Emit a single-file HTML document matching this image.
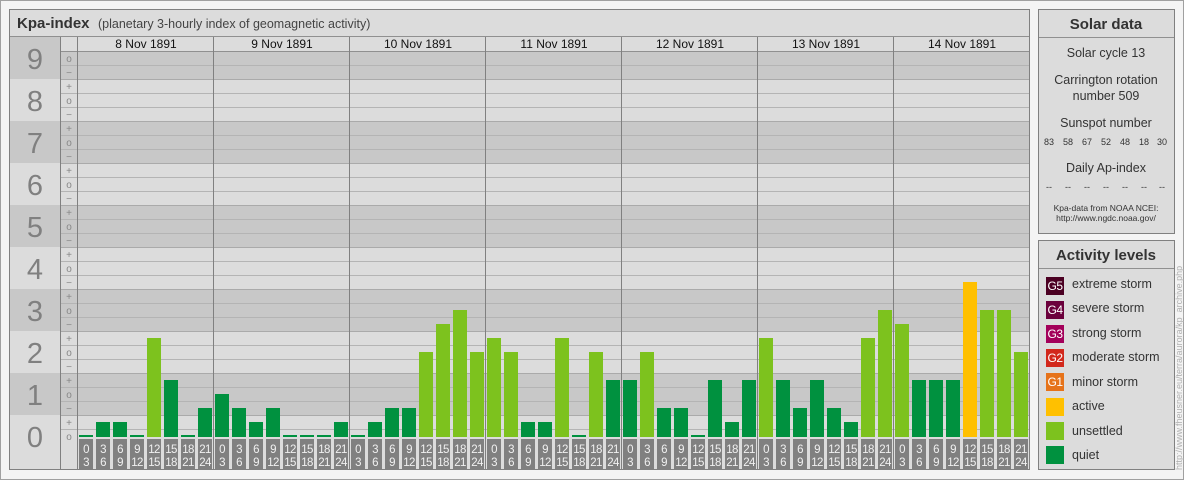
<!DOCTYPE html>
<html><head><meta charset="utf-8"><style>
html,body{margin:0;padding:0;background:#f4f4f4;}
svg{display:block;font-family:"Liberation Sans",Arial,sans-serif;}
</style></head><body>
<svg width="1184" height="480" viewBox="0 0 1184 480" xmlns="http://www.w3.org/2000/svg">
<rect x="0.5" y="0.5" width="1183" height="479" fill="#f4f4f4" stroke="#a0a0a0"/>
<!-- main panel -->
<rect x="9.5" y="9.5" width="1020" height="460" fill="#dcdcdc" stroke="#808080"/>
<line x1="10" y1="36.5" x2="1029" y2="36.5" stroke="#909090"/>
<text x="17" y="28" font-size="15" font-weight="bold" fill="#333">Kpa-index</text>
<text x="98" y="28" font-size="12.5" fill="#444">(planetary 3-hourly index of geomagnetic activity)</text>
<!-- bands -->
<g fill="#c8c8c8">
<rect x="10" y="37" width="50" height="42"/>
<rect x="60" y="51" width="969" height="28"/>
<rect x="10" y="121" width="1019" height="42"/>
<rect x="10" y="205" width="1019" height="42"/>
<rect x="10" y="289" width="1019" height="42"/>
<rect x="10" y="373" width="1019" height="42"/>
</g>
<!-- sub-row lines -->
<g stroke="#b4b4b4" stroke-width="1">
<path d="M60 65.5H1029M60 93.5H1029M60 107.5H1029M60 135.5H1029M60 149.5H1029M60 177.5H1029M60 191.5H1029M60 219.5H1029M60 233.5H1029M60 261.5H1029M60 275.5H1029M60 303.5H1029M60 317.5H1029M60 345.5H1029M60 359.5H1029M60 387.5H1029M60 401.5H1029M60 429.5H1029"/>
</g>
<g stroke="#aaaaaa"><path d="M60 79.5H1029M60 121.5H1029M60 163.5H1029M60 205.5H1029M60 247.5H1029M60 289.5H1029M60 331.5H1029M60 373.5H1029M60 415.5H1029"/></g>
<line x1="60" y1="51.5" x2="1029" y2="51.5" stroke="#909090"/>
<g stroke="#808080"><path d="M60.5 37V470M77.5 37V470M213.5 37V470M349.5 37V470M485.5 37V470M621.5 37V470M757.5 37V470M893.5 37V470"/></g>
<!-- big numbers -->
<g font-size="29" fill="#808080" text-anchor="middle">
<text x="35" y="69">9</text><text x="35" y="111">8</text><text x="35" y="153">7</text><text x="35" y="195">6</text><text x="35" y="237">5</text><text x="35" y="279">4</text><text x="35" y="321">3</text><text x="35" y="363">2</text><text x="35" y="405">1</text><text x="35" y="447">0</text>
</g>
<g font-size="10" fill="#888" text-anchor="middle">
<text x="69" y="62">o</text><text x="69" y="76">−</text>
<text x="69" y="90">+</text><text x="69" y="104">o</text><text x="69" y="118">−</text>
<text x="69" y="132">+</text><text x="69" y="146">o</text><text x="69" y="160">−</text>
<text x="69" y="174">+</text><text x="69" y="188">o</text><text x="69" y="202">−</text>
<text x="69" y="216">+</text><text x="69" y="230">o</text><text x="69" y="244">−</text>
<text x="69" y="258">+</text><text x="69" y="272">o</text><text x="69" y="286">−</text>
<text x="69" y="300">+</text><text x="69" y="314">o</text><text x="69" y="328">−</text>
<text x="69" y="342">+</text><text x="69" y="356">o</text><text x="69" y="370">−</text>
<text x="69" y="384">+</text><text x="69" y="398">o</text><text x="69" y="412">−</text>
<text x="69" y="426">+</text><text x="69" y="440">o</text>
</g>
<!-- day headers -->
<g font-size="12" fill="#111" text-anchor="middle">
<text x="146" y="48">8 Nov 1891</text><text x="282" y="48">9 Nov 1891</text><text x="418" y="48">10 Nov 1891</text><text x="554" y="48">11 Nov 1891</text><text x="690" y="48">12 Nov 1891</text><text x="826" y="48">13 Nov 1891</text><text x="962" y="48">14 Nov 1891</text>
</g>
<!-- bars -->
<g>
<rect x="79" y="435" width="14" height="2" fill="#00913f"/><rect x="96" y="422" width="14" height="15" fill="#00913f"/><rect x="113" y="422" width="14" height="15" fill="#00913f"/><rect x="130" y="435" width="14" height="2" fill="#00913f"/><rect x="147" y="338" width="14" height="99" fill="#7dc21e"/><rect x="164" y="380" width="14" height="57" fill="#00913f"/><rect x="181" y="435" width="14" height="2" fill="#00913f"/><rect x="198" y="408" width="14" height="29" fill="#00913f"/>
<rect x="215" y="394" width="14" height="43" fill="#00913f"/><rect x="232" y="408" width="14" height="29" fill="#00913f"/><rect x="249" y="422" width="14" height="15" fill="#00913f"/><rect x="266" y="408" width="14" height="29" fill="#00913f"/><rect x="283" y="435" width="14" height="2" fill="#00913f"/><rect x="300" y="435" width="14" height="2" fill="#00913f"/><rect x="317" y="435" width="14" height="2" fill="#00913f"/><rect x="334" y="422" width="14" height="15" fill="#00913f"/>
<rect x="351" y="435" width="14" height="2" fill="#00913f"/><rect x="368" y="422" width="14" height="15" fill="#00913f"/><rect x="385" y="408" width="14" height="29" fill="#00913f"/><rect x="402" y="408" width="14" height="29" fill="#00913f"/><rect x="419" y="352" width="14" height="85" fill="#7dc21e"/><rect x="436" y="324" width="14" height="113" fill="#7dc21e"/><rect x="453" y="310" width="14" height="127" fill="#7dc21e"/><rect x="470" y="352" width="14" height="85" fill="#7dc21e"/>
<rect x="487" y="338" width="14" height="99" fill="#7dc21e"/><rect x="504" y="352" width="14" height="85" fill="#7dc21e"/><rect x="521" y="422" width="14" height="15" fill="#00913f"/><rect x="538" y="422" width="14" height="15" fill="#00913f"/><rect x="555" y="338" width="14" height="99" fill="#7dc21e"/><rect x="572" y="435" width="14" height="2" fill="#00913f"/><rect x="589" y="352" width="14" height="85" fill="#7dc21e"/><rect x="606" y="380" width="14" height="57" fill="#00913f"/>
<rect x="623" y="380" width="14" height="57" fill="#00913f"/><rect x="640" y="352" width="14" height="85" fill="#7dc21e"/><rect x="657" y="408" width="14" height="29" fill="#00913f"/><rect x="674" y="408" width="14" height="29" fill="#00913f"/><rect x="691" y="435" width="14" height="2" fill="#00913f"/><rect x="708" y="380" width="14" height="57" fill="#00913f"/><rect x="725" y="422" width="14" height="15" fill="#00913f"/><rect x="742" y="380" width="14" height="57" fill="#00913f"/>
<rect x="759" y="338" width="14" height="99" fill="#7dc21e"/><rect x="776" y="380" width="14" height="57" fill="#00913f"/><rect x="793" y="408" width="14" height="29" fill="#00913f"/><rect x="810" y="380" width="14" height="57" fill="#00913f"/><rect x="827" y="408" width="14" height="29" fill="#00913f"/><rect x="844" y="422" width="14" height="15" fill="#00913f"/><rect x="861" y="338" width="14" height="99" fill="#7dc21e"/><rect x="878" y="310" width="14" height="127" fill="#7dc21e"/>
<rect x="895" y="324" width="14" height="113" fill="#7dc21e"/><rect x="912" y="380" width="14" height="57" fill="#00913f"/><rect x="929" y="380" width="14" height="57" fill="#00913f"/><rect x="946" y="380" width="14" height="57" fill="#00913f"/><rect x="963" y="282" width="14" height="155" fill="#ffc000"/><rect x="980" y="310" width="14" height="127" fill="#7dc21e"/><rect x="997" y="310" width="14" height="127" fill="#7dc21e"/><rect x="1014" y="352" width="14" height="85" fill="#7dc21e"/>
</g>
<!-- label boxes -->
<rect x="78" y="437" width="951" height="33" fill="#dcdcdc"/>
<g stroke="#808080"><path d="M213.5 437V470M349.5 437V470M485.5 437V470M621.5 437V470M757.5 437V470M893.5 437V470"/></g>
<g fill="#808080">
<rect x="79" y="439" width="14" height="30"/><rect x="96" y="439" width="14" height="30"/><rect x="113" y="439" width="14" height="30"/><rect x="130" y="439" width="14" height="30"/><rect x="147" y="439" width="14" height="30"/><rect x="164" y="439" width="14" height="30"/><rect x="181" y="439" width="14" height="30"/><rect x="198" y="439" width="14" height="30"/>
<rect x="215" y="439" width="14" height="30"/><rect x="232" y="439" width="14" height="30"/><rect x="249" y="439" width="14" height="30"/><rect x="266" y="439" width="14" height="30"/><rect x="283" y="439" width="14" height="30"/><rect x="300" y="439" width="14" height="30"/><rect x="317" y="439" width="14" height="30"/><rect x="334" y="439" width="14" height="30"/>
<rect x="351" y="439" width="14" height="30"/><rect x="368" y="439" width="14" height="30"/><rect x="385" y="439" width="14" height="30"/><rect x="402" y="439" width="14" height="30"/><rect x="419" y="439" width="14" height="30"/><rect x="436" y="439" width="14" height="30"/><rect x="453" y="439" width="14" height="30"/><rect x="470" y="439" width="14" height="30"/>
<rect x="487" y="439" width="14" height="30"/><rect x="504" y="439" width="14" height="30"/><rect x="521" y="439" width="14" height="30"/><rect x="538" y="439" width="14" height="30"/><rect x="555" y="439" width="14" height="30"/><rect x="572" y="439" width="14" height="30"/><rect x="589" y="439" width="14" height="30"/><rect x="606" y="439" width="14" height="30"/>
<rect x="623" y="439" width="14" height="30"/><rect x="640" y="439" width="14" height="30"/><rect x="657" y="439" width="14" height="30"/><rect x="674" y="439" width="14" height="30"/><rect x="691" y="439" width="14" height="30"/><rect x="708" y="439" width="14" height="30"/><rect x="725" y="439" width="14" height="30"/><rect x="742" y="439" width="14" height="30"/>
<rect x="759" y="439" width="14" height="30"/><rect x="776" y="439" width="14" height="30"/><rect x="793" y="439" width="14" height="30"/><rect x="810" y="439" width="14" height="30"/><rect x="827" y="439" width="14" height="30"/><rect x="844" y="439" width="14" height="30"/><rect x="861" y="439" width="14" height="30"/><rect x="878" y="439" width="14" height="30"/>
<rect x="895" y="439" width="14" height="30"/><rect x="912" y="439" width="14" height="30"/><rect x="929" y="439" width="14" height="30"/><rect x="946" y="439" width="14" height="30"/><rect x="963" y="439" width="14" height="30"/><rect x="980" y="439" width="14" height="30"/><rect x="997" y="439" width="14" height="30"/><rect x="1014" y="439" width="14" height="30"/>
</g>
<g font-size="11.5" fill="#f0f0f0" text-anchor="middle" letter-spacing="-0.6">
<text x="86" y="453">0</text><text x="103" y="453">3</text><text x="120" y="453">6</text><text x="137" y="453">9</text><text x="154" y="453">12</text><text x="171" y="453">15</text><text x="188" y="453">18</text><text x="205" y="453">21</text>
<text x="86" y="466">3</text><text x="103" y="466">6</text><text x="120" y="466">9</text><text x="137" y="466">12</text><text x="154" y="466">15</text><text x="171" y="466">18</text><text x="188" y="466">21</text><text x="205" y="466">24</text>
<text x="222" y="453">0</text><text x="239" y="453">3</text><text x="256" y="453">6</text><text x="273" y="453">9</text><text x="290" y="453">12</text><text x="307" y="453">15</text><text x="324" y="453">18</text><text x="341" y="453">21</text>
<text x="222" y="466">3</text><text x="239" y="466">6</text><text x="256" y="466">9</text><text x="273" y="466">12</text><text x="290" y="466">15</text><text x="307" y="466">18</text><text x="324" y="466">21</text><text x="341" y="466">24</text>
<text x="358" y="453">0</text><text x="375" y="453">3</text><text x="392" y="453">6</text><text x="409" y="453">9</text><text x="426" y="453">12</text><text x="443" y="453">15</text><text x="460" y="453">18</text><text x="477" y="453">21</text>
<text x="358" y="466">3</text><text x="375" y="466">6</text><text x="392" y="466">9</text><text x="409" y="466">12</text><text x="426" y="466">15</text><text x="443" y="466">18</text><text x="460" y="466">21</text><text x="477" y="466">24</text>
<text x="494" y="453">0</text><text x="511" y="453">3</text><text x="528" y="453">6</text><text x="545" y="453">9</text><text x="562" y="453">12</text><text x="579" y="453">15</text><text x="596" y="453">18</text><text x="613" y="453">21</text>
<text x="494" y="466">3</text><text x="511" y="466">6</text><text x="528" y="466">9</text><text x="545" y="466">12</text><text x="562" y="466">15</text><text x="579" y="466">18</text><text x="596" y="466">21</text><text x="613" y="466">24</text>
<text x="630" y="453">0</text><text x="647" y="453">3</text><text x="664" y="453">6</text><text x="681" y="453">9</text><text x="698" y="453">12</text><text x="715" y="453">15</text><text x="732" y="453">18</text><text x="749" y="453">21</text>
<text x="630" y="466">3</text><text x="647" y="466">6</text><text x="664" y="466">9</text><text x="681" y="466">12</text><text x="698" y="466">15</text><text x="715" y="466">18</text><text x="732" y="466">21</text><text x="749" y="466">24</text>
<text x="766" y="453">0</text><text x="783" y="453">3</text><text x="800" y="453">6</text><text x="817" y="453">9</text><text x="834" y="453">12</text><text x="851" y="453">15</text><text x="868" y="453">18</text><text x="885" y="453">21</text>
<text x="766" y="466">3</text><text x="783" y="466">6</text><text x="800" y="466">9</text><text x="817" y="466">12</text><text x="834" y="466">15</text><text x="851" y="466">18</text><text x="868" y="466">21</text><text x="885" y="466">24</text>
<text x="902" y="453">0</text><text x="919" y="453">3</text><text x="936" y="453">6</text><text x="953" y="453">9</text><text x="970" y="453">12</text><text x="987" y="453">15</text><text x="1004" y="453">18</text><text x="1021" y="453">21</text>
<text x="902" y="466">3</text><text x="919" y="466">6</text><text x="936" y="466">9</text><text x="953" y="466">12</text><text x="970" y="466">15</text><text x="987" y="466">18</text><text x="1004" y="466">21</text><text x="1021" y="466">24</text>
</g>
<rect x="9.5" y="9.5" width="1020" height="460" fill="none" stroke="#808080"/>
<!-- Solar data -->
<rect x="1038.5" y="9.5" width="136" height="224" fill="#dcdcdc" stroke="#808080"/>
<line x1="1039" y1="37.5" x2="1174" y2="37.5" stroke="#909090"/>
<g text-anchor="middle" fill="#333">
<text x="1106" y="29" font-size="15" font-weight="bold">Solar data</text>
<text x="1106" y="57" font-size="12.5">Solar cycle 13</text>
<text x="1106" y="84" font-size="12.5">Carrington rotation</text>
<text x="1106" y="100" font-size="12.5">number 509</text>
<text x="1106" y="127" font-size="12.5">Sunspot number</text>
<text x="1106" y="172" font-size="12.5">Daily Ap-index</text>
</g>
<g text-anchor="middle" fill="#333" font-size="9">
<text x="1049" y="145">83</text><text x="1068" y="145">58</text><text x="1087" y="145">67</text><text x="1106" y="145">52</text><text x="1125" y="145">48</text><text x="1144" y="145">18</text><text x="1162" y="145">30</text>
<text x="1049" y="190">--</text><text x="1068" y="190">--</text><text x="1087" y="190">--</text><text x="1106" y="190">--</text><text x="1125" y="190">--</text><text x="1144" y="190">--</text><text x="1162" y="190">--</text>
<text x="1106" y="211" font-size="8.5">Kpa-data from NOAA NCEI:</text>
<text x="1106" y="221" font-size="8.5">http://www.ngdc.noaa.gov/</text>
</g>
<!-- Activity levels -->
<rect x="1038.5" y="240.5" width="136" height="229" fill="#dcdcdc" stroke="#808080"/>
<line x1="1039" y1="268.5" x2="1174" y2="268.5" stroke="#909090"/>
<text x="1106" y="260" font-size="15" font-weight="bold" text-anchor="middle" fill="#333">Activity levels</text>
<rect x="1046" y="277" width="18" height="18" fill="#4b0022"/>
<rect x="1046" y="301" width="18" height="18" fill="#6b003c"/>
<rect x="1046" y="325" width="18" height="18" fill="#a3005a"/>
<rect x="1046" y="349" width="18" height="18" fill="#d2281c"/>
<rect x="1046" y="373" width="18" height="18" fill="#e6731a"/>
<rect x="1046" y="398" width="18" height="18" fill="#ffc000"/>
<rect x="1046" y="422" width="18" height="18" fill="#7dc21e"/>
<rect x="1046" y="446" width="18" height="18" fill="#00913f"/>
<g font-size="12" fill="#fff" text-anchor="middle" letter-spacing="-0.5">
<text x="1055" y="290">G5</text><text x="1055" y="314">G4</text><text x="1055" y="338">G3</text><text x="1055" y="362">G2</text><text x="1055" y="386">G1</text>
</g>
<g font-size="12.5" fill="#333">
<text x="1072" y="288">extreme storm</text><text x="1072" y="312">severe storm</text><text x="1072" y="337">strong storm</text><text x="1072" y="361">moderate storm</text><text x="1072" y="386">minor storm</text><text x="1072" y="410">active</text><text x="1072" y="435">unsettled</text><text x="1072" y="459">quiet</text>
</g>
<text transform="translate(1182,470) rotate(-90)" font-size="9" fill="#b0b0b0">http://www.fheusner.eu/terra/aurora/kp_archive.php</text>
</svg>
</body></html>
